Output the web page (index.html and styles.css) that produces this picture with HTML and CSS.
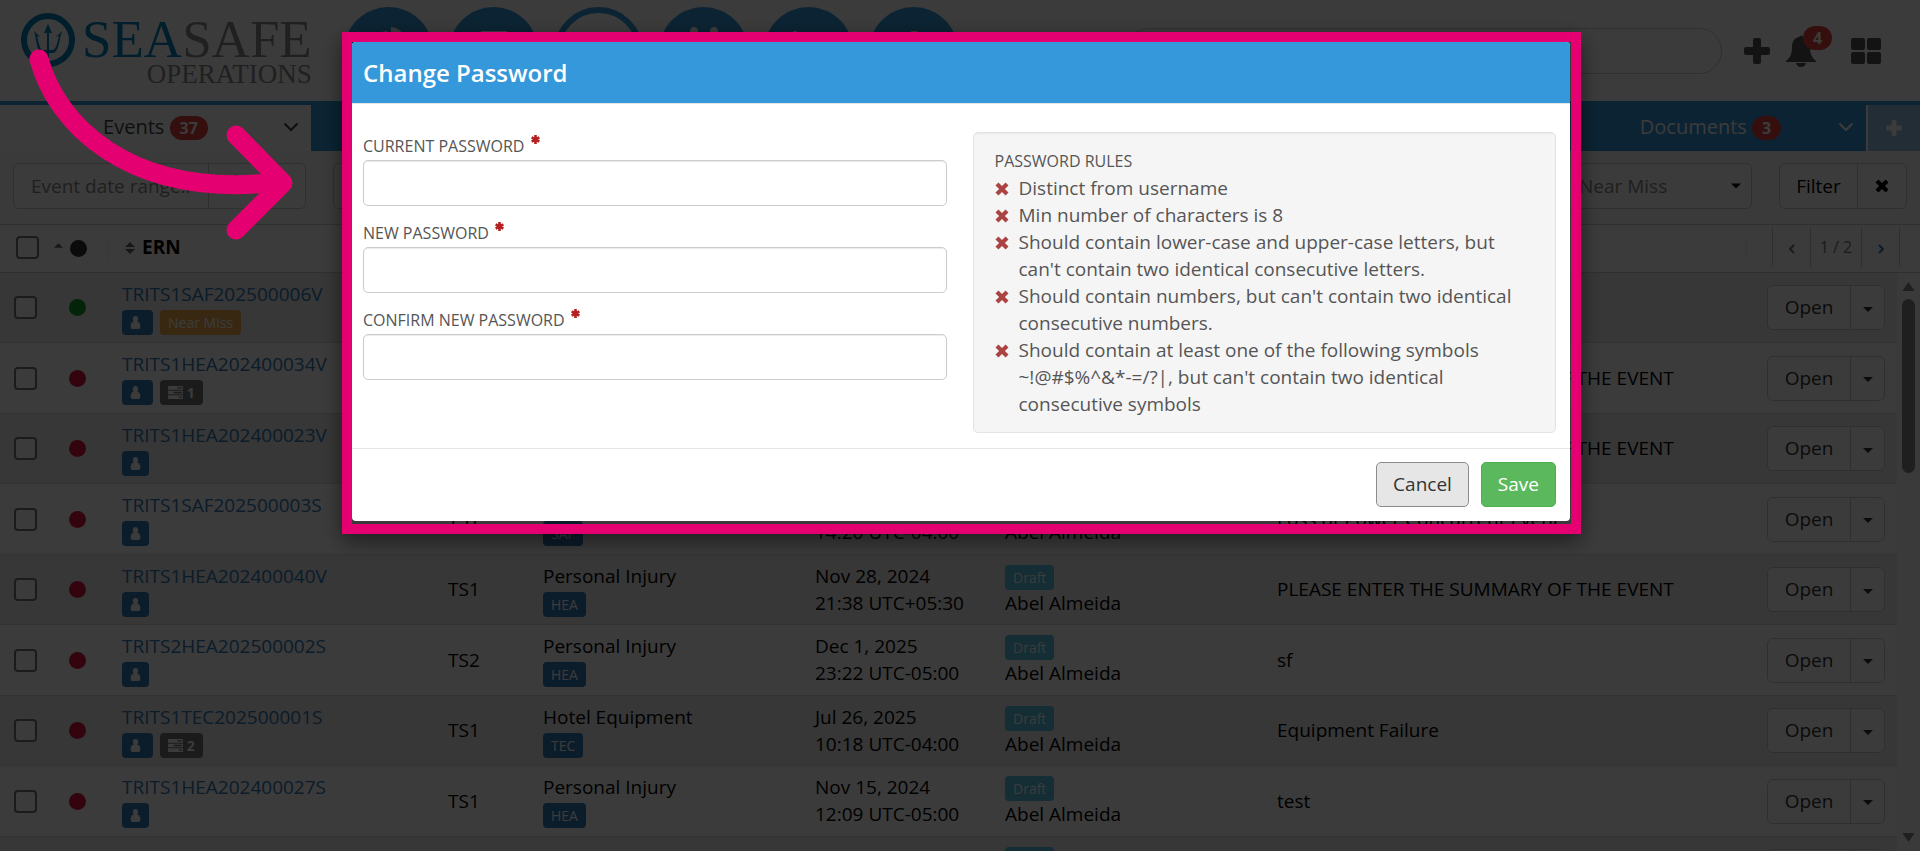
FILE: index.html
```html
<!DOCTYPE html>
<html lang="en">
<head>
    <meta charset="utf-8">
    <title>Seasafe Operations</title>
    <link rel="stylesheet" href="styles.css">
</head>
<body>
    <svg class="sprite" aria-hidden="true">
        <symbol id="i-user" viewBox="0 0 12 16"><path d="M6 0c2 0 3.300 1.500 3.300 3.600 0 1.300-.5 2.500-1.300 3.200 2.600.4 4 2.300 4 5.700 0 2-1 3.500-2.600 3.500H2.600C1 16 0 14.500 0 12.500 0 9.100 1.400 7.200 4 6.800 3.200 6.100 2.700 4.900 2.700 3.600 2.700 1.500 4 0 6 0z"/></symbol>
        <symbol id="i-tasks" viewBox="0 0 16 14"><path fill-rule="evenodd" d="M0 0h16v4H0zM10 1.300h4.800v1.400H10zM0 5h16v4H0zM6 6.300h8.800v1.400H6zM0 10h16v4H0zM11.500 11.300h3.300v1.400h-3.300z"/></symbol>
        <symbol id="i-times" viewBox="0 0 14 14"><path d="M3.400.5 7 4.100 10.600.5l2.900 2.900L9.900 7l3.600 3.600-2.900 2.900L7 9.900l-3.600 3.600-2.900-2.900L4.100 7 .5 3.400z"/></symbol>
        <symbol id="i-star" viewBox="0 0 10 10"><path d="M5 1v8M1.500 3l7 4M8.500 3l-7 4" fill="none" stroke="currentColor" stroke-width="2.400" stroke-linecap="butt"/></symbol>
        <symbol id="i-down" viewBox="0 0 16 10"><path d="M1.500 1.500 8 8l6.500-6.500" fill="none" stroke="currentColor" stroke-width="2.200"/></symbol>
        <symbol id="i-plus" viewBox="0 0 26 26"><path d="M11 0h4q2 0 2 2v7h7q2 0 2 2v4q0 2-2 2h-7v7q0 2-2 2h-4q-2 0-2-2v-7H2q-2 0-2-2v-4q0-2 2-2h7V2q0-2 2-2z"/></symbol>
        <symbol id="i-caret" viewBox="0 0 10 5"><path d="M0 0h10L5 5z"/></symbol>
    </svg>

    <header class="topbar">
        <a class="logo" href="#">
            <svg class="emblem" viewBox="0 0 56 56">
                <circle cx="28" cy="28" r="24" fill="none" stroke="#0080bd" stroke-width="6"/>
                <path d="M28 12l4 9h-3v17h3c4 0 5-6 7-14l-3 1 9-9-3 3c-3 9-3 21-9 22h-4v6h-3v-6h-3c-7-1-6-13-9-22l-3-3 9 9-3-1c2 8 3 14 6 14h4V21h-3z" fill="#0080bd"/>
            </svg>
            <span class="logo-text">
                <span class="logo-name"><b>SEA</b>SAFE</span>
                <span class="logo-sub">OPERATIONS</span>
            </span>
        </a>
        <nav class="modules">
            <a class="module" href="#" aria-label="Statistics"><svg viewBox="0 0 40 40"><path d="M18 4v18l13 13A18 18 0 1 1 18 4zM22 0a18 18 0 0 1 16 18H22z"/></svg></a>
            <a class="module" href="#" aria-label="Documents"><svg viewBox="0 0 40 40"><path d="M7 4h26v5H7zM7 14h26v5H7zM7 24h26v5H7z"/></svg></a>
            <a class="module active" href="#" aria-label="Events"><svg viewBox="0 0 40 40"><path d="M20 6l16 28H4z"/></svg></a>
            <a class="module" href="#" aria-label="Inspections"><svg viewBox="0 0 40 40"><path d="M6 5q0-5 4-5t4 5v6h12V5q0-5 4-5t4 5l4 26q0 6-7 6t-7-8h-8q0 8-7 8t-7-6z"/></svg></a>
            <a class="module" href="#" aria-label="Charts"><svg viewBox="0 0 40 40"><path d="M4 4h4v28h30v4H4zM14 20h5v9h-5zM24 12h5v17h-5z"/></svg></a>
            <a class="module" href="#" aria-label="Admin"><svg viewBox="0 0 40 40"><path d="M17 4h6l2 6 6-2 4 6-4 5 4 5-4 6-6-2-2 6h-6l-2-6-6 2-4-6 4-5-4-5 4-6 6 2z"/></svg></a>
        </nav>
        <input class="search" type="search" aria-label="Search">
        <div class="tools">
            <button class="icon-btn" aria-label="Add"><svg width="26" height="26"><use href="#i-plus"/></svg></button>
            <button class="icon-btn bell" aria-label="Notifications">
                <svg width="30" height="32" viewBox="0 0 30 32"><path d="M13 2q2-3 4 0c5 1 7 5 7 10 0 7 2 11 6 14v1H0v-1c4-3 6-7 6-14 0-5 2-9 7-10zM10 28h10q-1 4-5 4t-5-4z"/></svg>
                <span class="badge">4</span>
            </button>
            <button class="icon-btn" aria-label="Apps"><svg width="30" height="26" viewBox="0 0 30 26"><rect width="14" height="12" rx="2"/><rect x="16" width="14" height="12" rx="2"/><rect y="14" width="14" height="12" rx="2"/><rect x="16" y="14" width="14" height="12" rx="2"/></svg></button>
        </div>
    </header>

    <nav class="tabs">
        <a class="tab active" href="#"><span class="tab-label">Events <span class="badge">37</span></span><svg class="tab-arrow"><use href="#i-down"/></svg></a>
        <a class="tab last" href="#"><span class="tab-label">Documents <span class="badge">3</span></span><svg class="tab-arrow"><use href="#i-down"/></svg></a>
        <button class="tab-add" aria-label="Add tab"><svg width="16" height="16"><use href="#i-plus"/></svg></button>
    </nav>

    <div class="filters">
        <div class="group date-group">
            <input type="text" placeholder="Event date range..." aria-label="Event date range">
            <button aria-label="Pick date"><svg width="18" height="18" viewBox="0 0 18 18"><path fill-rule="evenodd" d="M0 3h18v15H0zM2 7h14v9H2zM4 0h2v3H4zM12 0h2v3h-2z"/></svg></button>
        </div>
        <input class="field wide" type="text" aria-label="Keyword">
        <div class="select-box">
            <select class="field" aria-label="Near Miss"><option>Near Miss</option></select>
            <svg width="10" height="6"><use href="#i-caret"/></svg>
        </div>
        <div class="group filter-group">
            <button class="filter-btn">Filter</button>
            <button aria-label="Clear filter"><svg width="14" height="14"><use href="#i-times"/></svg></button>
        </div>
    </div>

    <table class="grid grid-head">
        <tr>
            <th class="c-check"><input type="checkbox" aria-label="Select all"></th>
            <th class="c-dot sep"><svg class="sort-up" width="9" height="5" viewBox="0 0 10 5"><path d="M0 5h10L5 0z"/></svg><span class="dot black"></span></th>
            <th class="c-ern"><svg class="sort" width="10" height="12" viewBox="0 0 10 12"><path d="M0 5h10L5 0zM0 7h10l-5 5z"/></svg>ERN</th>
            <th class="c-pager">
                <div class="pager">
                    <button aria-label="Previous page"><svg width="6" height="10" viewBox="0 0 6 10"><path d="M5 1 1 5l4 4"/></svg></button>
                    <span>1 / 2</span>
                    <button class="next" aria-label="Next page"><svg width="6" height="10" viewBox="0 0 6 10"><path d="m1 1 4 4-4 4"/></svg></button>
                </div>
            </th>
        </tr>
    </table>

    <div class="list">
        <div class="list-view">
            <table class="grid grid-body"><tbody id="rows"></tbody></table>
        </div>
        <div class="scrollbar">
            <svg width="11" height="9" viewBox="0 0 11 9"><path d="M5.500 0 11 8v1H0V8z"/></svg>
            <div class="thumb"></div>
            <svg width="11" height="9" viewBox="0 0 11 9"><path d="M5.500 9 11 1V0H0v1z"/></svg>
        </div>
    </div>

    <div class="backdrop">
        <div class="frame">
            <form class="modal" role="dialog" aria-labelledby="modal-title">
                <div class="modal-header"><h4 id="modal-title">Change Password</h4></div>
                <div class="modal-body">
                    <div class="fields">
                        <label for="current">CURRENT PASSWORD <svg><use href="#i-star"/></svg></label>
                        <input id="current" type="password">
                        <label for="new">NEW PASSWORD <svg><use href="#i-star"/></svg></label>
                        <input id="new" type="password">
                        <label for="confirm">CONFIRM NEW PASSWORD <svg><use href="#i-star"/></svg></label>
                        <input id="confirm" type="password">
                    </div>
                    <div class="well">
                        <div class="well-title">PASSWORD RULES</div>
                        <ul class="rules">
                            <li><svg><use href="#i-times"/></svg><span>Distinct from username</span></li>
                            <li><svg><use href="#i-times"/></svg><span>Min number of characters is 8</span></li>
                            <li><svg><use href="#i-times"/></svg><span>Should contain lower-case and upper-case letters, but can't contain two identical consecutive letters.</span></li>
                            <li><svg><use href="#i-times"/></svg><span>Should contain numbers, but can't contain two identical consecutive numbers.</span></li>
                            <li><svg><use href="#i-times"/></svg><span>Should contain at least one of the following symbols ~!@#$%^&amp;*-=/?|, but can't contain two identical consecutive symbols</span></li>
                        </ul>
                    </div>
                </div>
                <div class="modal-footer">
                    <button type="button" class="btn btn-cancel">Cancel</button>
                    <button type="button" class="btn btn-save">Save</button>
                </div>
            </form>
        </div>
    </div>

    <svg class="arrow" width="310" height="260" viewBox="0 0 310 260">
        <path d="M39 59C55 120 125 200 278 182M236 135l47 48-47 47"/>
    </svg>

    <script src="rows.js"></script>
</body>
</html>
```
FILE: rows.js
```js
var please = "PLEASE ENTER THE SUMMARY OF THE EVENT";
var rows = [
    { ern: "TRITS1SAF202500006V", dot: "green", near: true },
    { ern: "TRITS1HEA202400034V", tasks: 1, summary: please },
    { ern: "TRITS1HEA202400023V", summary: please },
    { ern: "TRITS1SAF202500003S", ship: "TS1", type: "", code: "SAF", date: "", time: "14:20 UTC-04:00", summary: "Loss of Power Concurrent Event" },
    { ern: "TRITS1HEA202400040V", ship: "TS1", type: "Personal Injury", code: "HEA", date: "Nov 28, 2024", time: "21:38 UTC+05:30", summary: please },
    { ern: "TRITS2HEA202500002S", ship: "TS2", type: "Personal Injury", code: "HEA", date: "Dec 1, 2025", time: "23:22 UTC-05:00", summary: "sf" },
    { ern: "TRITS1TEC202500001S", tasks: 2, ship: "TS1", type: "Hotel Equipment", code: "TEC", date: "Jul 26, 2025", time: "10:18 UTC-04:00", summary: "Equipment Failure" },
    { ern: "TRITS1HEA202400027S", ship: "TS1", type: "Personal Injury", code: "HEA", date: "Nov 15, 2024", time: "12:09 UTC-05:00", summary: "test" },
    { ern: "", code: "", ship: "", type: "", date: "", time: "", summary: "" }
];

function line(html) {
    return '<div class="line">' + html + '</div>';
}

var html = "";
for (var i = 0; i < rows.length; i++) {
    var r = rows[i];
    var wide = r.near || r.tasks ? " wide" : "";
    var tags = '<span class="label primary' + wide + '"><svg width="11" height="13"><use href="#i-user"/></svg></span>';
    if (r.near) tags += '<span class="label warning">Near Miss</span>';
    if (r.tasks) tags += '<span class="label default"><svg width="15" height="13"><use href="#i-tasks"/></svg> ' + r.tasks + '</span>';
    var full = r.ship !== undefined;
    html += '<tr>' +
        '<td class="c-check"><input type="checkbox" aria-label="Select row"></td>' +
        '<td class="c-dot"><span class="dot ' + (r.dot || "red") + '"></span></td>' +
        '<td class="c-ern">' + line('<a href="#">' + r.ern + '</a>') + line(tags) + '</td>' +
        '<td class="c-ship">' + (r.ship || "") + '</td>' +
        '<td class="c-type">' + (full ? line(r.type) + line(r.code ? '<span class="label primary">' + r.code + '</span>' : "") : "") + '</td>' +
        '<td class="c-date">' + (full ? line(r.date) + line(r.time) : "") + '</td>' +
        '<td class="c-person">' + (full ? line('<span class="label info">Draft</span>') + line("Abel Almeida") : "") + '</td>' +
        '<td class="c-summary">' + (r.summary || "") + '</td>' +
        '<td class="c-action"><div class="group"><button>Open</button><button class="more" aria-label="More"><svg width="10" height="5"><use href="#i-caret"/></svg></button></div></td>' +
        '</tr>';
}
document.getElementById("rows").innerHTML = html;
```
FILE: styles.css
```css
* {
    box-sizing: border-box;
}

html, body {
    height: 100%;
}

body {
    margin: 0;
    display: flex;
    flex-direction: column;
    overflow: hidden;
    background: #fff;
    color: #000;
    font-family: "Open Sans", "Noto Sans", sans-serif;
    font-size: 19px;
    line-height: 27px;
}

a {
    color: #337ab7;
    text-decoration: none;
}

button, input, select {
    font: inherit;
    color: inherit;
    margin: 0;
}

button {
    background: none;
    border: 0;
    padding: 0;
    cursor: pointer;
}

svg {
    fill: currentColor;
}

.sprite {
    display: none;
}

.badge {
    display: inline-block;
    padding: 0 10px;
    border-radius: 12px;
    background: #e0403c;
    color: #fff;
    font-size: 16px;
    font-weight: bold;
    line-height: 24px;
}

/* top bar */
.topbar {
    display: flex;
    align-items: flex-start;
    height: 101px;
    padding-right: 39px;
}

.logo {
    display: flex;
    gap: 6px;
    width: 325px;
    padding: 12px 0 0 20px;
    color: #8c8c8c;
    font-family: "Liberation Serif", serif;
}

.emblem {
    width: 56px;
    height: 56px;
}

.logo-text {
    display: flex;
    flex-direction: column;
    align-items: flex-end;
}

.logo-name {
    font-size: 53px;
    line-height: 54px;
}

.logo-name b {
    color: #0080bd;
    font-weight: normal;
}

.logo-sub {
    font-size: 27px;
    line-height: 16px;
}

.modules {
    display: flex;
    gap: 16px;
    padding: 7px 0 0 19px;
}

.module {
    display: flex;
    justify-content: center;
    padding-top: 20px;
    width: 89px;
    height: 89px;
    border-radius: 50%;
    background: #3498db;
    color: #fff;
}

.module svg {
    width: 40px;
    height: 40px;
}

.module.active {
    background: #fff;
    border: 6px solid #3498db;
    color: #3498db;
}

.search {
    flex: 1;
    height: 46px;
    margin: 28px 22px 0 168px;
    padding: 0 20px;
    border: 1px solid #ccc;
    border-radius: 23px;
    background: #fff;
}

.tools {
    display: flex;
    gap: 16px;
    padding-top: 36px;
    color: #555;
}

.icon-btn {
    display: flex;
    align-items: center;
    height: 30px;
}

.bell {
    position: relative;
    margin-right: 19px;
}

.bell .badge {
    position: absolute;
    left: 17px;
    top: -10px;
}

/* tabs */
.tabs {
    display: grid;
    grid-template-columns: repeat(6, 1fr) 54px;
    height: 50px;
    border-top: 4px solid #3498db;
    background: #3498db;
    font-size: 20px;
}

.tab {
    display: grid;
    grid-template-columns: 1fr auto 1fr;
    align-items: center;
    color: #fff;
    padding-bottom: 3px;
}

.tab.active {
    background: #fff;
    color: #444;
}

.tab.last {
    grid-column: 6;
}

.tab-label {
    grid-column: 2;
}

.tab-arrow {
    width: 16px;
    height: 10px;
    margin-right: 12px;
    justify-self: end;
}

.tab-add {
    border-left: 2px solid #fff;
    background: #98c4e6;
    color: #fff;
}

/* filters */
.filters {
    display: flex;
    gap: 27px;
    padding: 12px 13px 15px;
    border-bottom: 1px solid #ccc;
    background: #f8f8f8;
}

.group {
    display: flex;
    border: 1px solid #ccc;
    border-radius: 6px;
    background: #fff;
}

.group > * + * {
    border-left: 1px solid #ccc;
}

.group input {
    width: 194px;
    padding: 0 17px;
    border: 0;
    background: none;
}

.date-group {
    width: 293px;
}

.date-group button {
    width: 50px;
    flex: 1;
    padding-right: 48px;
}

::placeholder {
    color: #888;
}

.field {
    height: 46px;
    padding: 0 16px;
    border: 1px solid #ccc;
    border-radius: 6px;
    background: #fff;
    color: #888;
}

.wide {
    flex: 1;
}

.select-box {
    display: grid;
    align-items: center;
    width: 190px;
}

.select-box > * {
    grid-area: 1 / 1;
}

.select-box select {
    width: 100%;
    appearance: none;
}

.select-box svg {
    justify-self: end;
    margin-right: 11px;
}

.filter-group {
    width: 128px;
}

.filter-group button {
    flex: 1;
}

.filter-group .filter-btn {
    flex: 0 0 77px;
}

/* grid */
.grid {
    width: 100%;
    table-layout: fixed;
    border-collapse: separate;
    border-spacing: 0;
}

.grid th, .grid td {
    padding: 7px 0 7px 14px;
    border-bottom: 1px solid #ddd;
    text-align: left;
    font-weight: normal;
}

.grid-head tr {
    height: 48px;
}

.grid-head th {
    padding-top: 0;
    padding-bottom: 2px;
    border-bottom-color: #ccc;
    font-weight: bold;
}

.grid-head .c-check {
    padding-left: 16px;
}

.grid-body tr {
    height: 70px;
}

.grid-body tr:nth-child(even) {
    height: 71px;
}

.grid-body tr:nth-child(odd) {
    background: #ebebeb;
}

.sep, .grid .c-pager {
    background: linear-gradient(#eee, #eee) no-repeat right center / 1px 22px;
}

.grid .c-pager {
    background-position: left center;
}

.c-check { width: 49px; }
.c-dot { width: 59px; }
.c-ern { width: 326px; }
.c-ship { width: 95px; }
.c-type { width: 272px; }
.c-date { width: 190px; }
.c-person { width: 272px; }
.c-action { width: 144px; }

.grid-head .c-ern {
    width: auto;
    padding-left: 17px;
}

.c-pager {
    width: 174px;
}

.grid .c-dot {
    padding-left: 20px;
}

.grid-head .c-dot {
    padding-left: 5px;
}

input[type=checkbox] {
    display: block;
    appearance: none;
    width: 23px;
    height: 23px;
    border: 2px solid #777;
    border-radius: 4px;
    background: #fff;
}

.dot {
    display: block;
    width: 17px;
    height: 17px;
    border-radius: 50%;
}

.dot.red { background: #dc143c; }
.dot.green { background: #0f9d26; }

.dot.black {
    display: inline-block;
    margin-left: 7px;
    vertical-align: middle;
    background: #333;
}

.sort-up {
    vertical-align: middle;
    margin-bottom: 6px;
    color: #666;
}

.sort {
    margin-right: 7px;
    color: #666;
}

.line {
    height: 27px;
    white-space: nowrap;
}

.label {
    display: inline-block;
    height: 25px;
    margin: 2px 7px 0 0;
    padding: 0 8px;
    border-radius: 4px;
    color: #fff;
    font-size: 14px;
    line-height: 26px;
    vertical-align: top;
}

.label svg {
    vertical-align: -1px;
}

.label.wide { padding-right: 12px; }
.label.primary { background: #337ab7; }
.label.warning { background: #f0ad4e; }
.label.info { background: #5bc0de; }

.label.default {
    background: #777;
    font-weight: bold;
}

.c-action .group {
    width: 118px;
    height: 45px;
    color: #333;
}

.c-action .group button {
    flex: 1;
}

.c-action .group .more {
    flex: 0 0 34px;
    padding-top: 3px;
}

.c-action .more svg {
    display: block;
    margin: 0 auto;
}

.pager {
    display: flex;
    width: 128px;
    height: 39px;
    margin-left: 12px;
    border: 1px solid #ccc;
    border-width: 0 1px;
    color: #777;
    font-size: 16px;
    font-weight: normal;
    line-height: 38px;
}

.pager button {
    flex: 1;
}

.pager span {
    flex: 0 0 52px;
    border: 1px solid #ccc;
    border-width: 0 1px;
    text-align: center;
}

.pager svg {
    fill: none;
    stroke: currentColor;
    stroke-width: 2;
}

.pager .next {
    color: #337ab7;
}

.list {
    display: flex;
    flex: 1;
    min-height: 0;
}

.list-view {
    flex: 1;
    overflow: hidden;
}

.scrollbar {
    display: flex;
    flex-direction: column;
    align-items: center;
    gap: 8px;
    width: 23px;
    padding: 9px 0;
    background: #fafafa;
    color: #888;
}

.scrollbar svg:last-child {
    margin-top: auto;
}

.thumb {
    width: 13px;
    height: 31%;
    border-radius: 7px;
    background: #888;
}

/* modal */
.backdrop {
    position: fixed;
    inset: 0;
    padding: 32px 0 0 3px;
    background: rgba(0, 0, 0, .77);
}

.frame {
    width: min(1239px, 96vw);
    margin: 0 auto;
    padding: 0 1px 3px 0;
    border: 10px solid #e50071;
    box-shadow: 0 7px 20px rgba(0, 0, 0, .5);
}

.modal {
    border-radius: 4px;
    background: #fff;
    color: #555;
}

.modal-header {
    padding: 17px 11px;
    border-bottom: 1px solid #e5e5e5;
    border-radius: 4px 4px 0 0;
    background: #3498db;
    color: #fff;
}

.modal-header h4 {
    margin: 0;
    font-size: 24px;
    font-weight: 600;
    line-height: 27px;
}

.modal-body {
    display: grid;
    grid-template-columns: 1fr 1fr;
    gap: 26px;
    padding: 28px 14px 15px 11px;
}

.fields {
    padding-top: 1px;
}

.fields label {
    display: block;
    font-size: 16px;
}

.fields label svg {
    width: 11px;
    height: 11px;
    margin-left: 1px;
    vertical-align: 7px;
    color: #b52020;
}

.fields input {
    display: block;
    width: 100%;
    height: 46px;
    margin-bottom: 14px;
    padding: 0 16px;
    border: 1px solid #ccc;
    border-radius: 5px;
    box-shadow: inset 0 1px 1px rgba(0, 0, 0, .08);
}

.well {
    padding: 15px 22px 14px 21px;
    border: 1px solid #e3e3e3;
    border-radius: 5px;
    background: #f5f5f5;
    box-shadow: inset 0 1px 1px rgba(0, 0, 0, .05);
}

.well-title {
    font-size: 16px;
}

.rules {
    margin: 0;
    padding: 0;
    list-style: none;
}

.rules li {
    display: flex;
    gap: 10px;
}

.rules svg {
    flex: none;
    width: 14px;
    height: 14px;
    margin-top: 7px;
    color: #a94442;
}

.modal-footer {
    display: flex;
    justify-content: flex-end;
    gap: 12px;
    padding: 13px 14px 14px;
    border-top: 1px solid #e5e5e5;
}

.btn {
    height: 45px;
    padding: 0 16px;
    border: 1px solid #8c8c8c;
    border-radius: 5px;
}

.btn-cancel {
    background: #e6e6e6;
    color: #333;
}

.btn-save {
    border-color: #4cae4c;
    background: #5cb85c;
    color: #fff;
}

.arrow {
    position: fixed;
    left: 0;
    top: 0;
    fill: none;
    stroke: #e50071;
    stroke-width: 19;
    stroke-linecap: round;
    stroke-linejoin: round;
}
```
